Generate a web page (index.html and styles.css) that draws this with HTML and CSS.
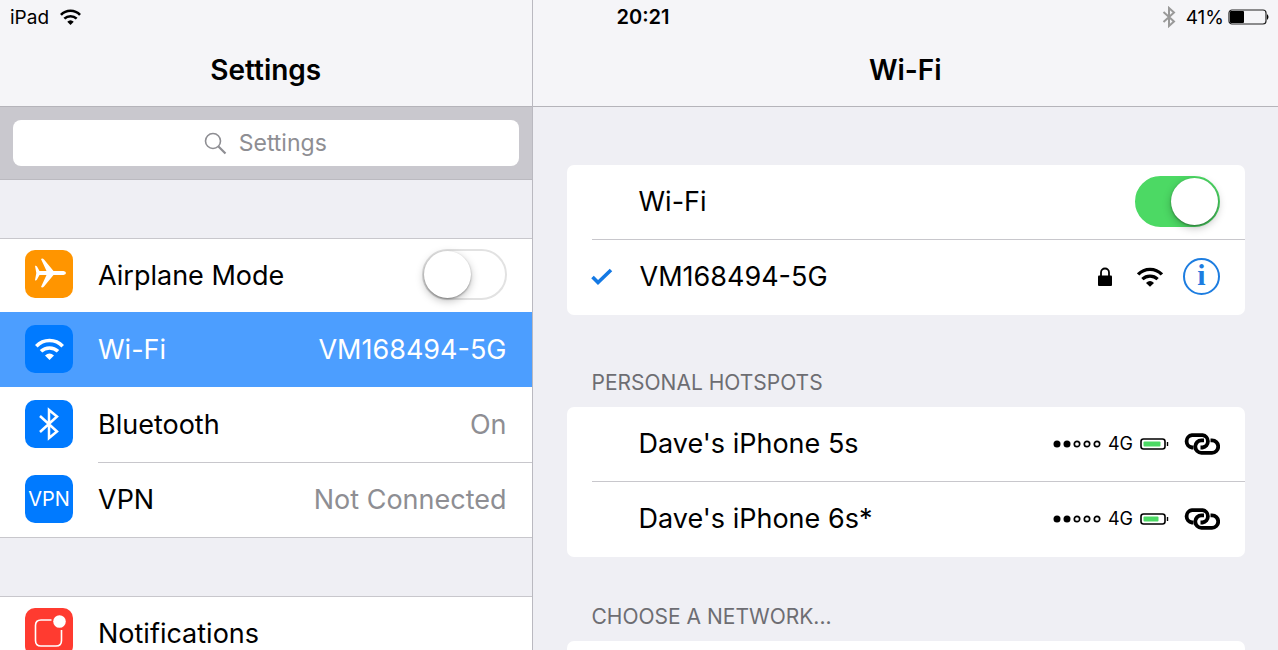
FILE: index.html
```html
<!DOCTYPE html>
<html lang="en">
<head>
    <meta charset="UTF-8">
    <meta name="viewport" content="width=device-width, initial-scale=1.0">
    <title>Settings - Wi-Fi</title>
    <link rel="stylesheet" href="styles.css">
</head>
<body>
    <!-- Shared icons -->
    <svg class="sprite" aria-hidden="true">
        <symbol id="wifi" viewBox="0 0 29 22">
            <path d="M1.3 8.2A18 18 0 0 1 27.7 8.2M6 13.3A12.4 12.4 0 0 1 23 13.3" fill="none" stroke="currentColor" stroke-width="3.6"/>
            <path d="M10 17.6Q14.5 13.4 19 17.6L14.5 22Z" fill="currentColor"/>
        </symbol>
        <symbol id="bluetooth" viewBox="0 0 20 34">
            <path d="M1 9L18 24.5L10 31V3L18 9.500L1 25" fill="none" stroke="currentColor" stroke-width="2.500"/>
        </symbol>
        <symbol id="link" viewBox="0 0 36 22">
            <g fill="none" stroke="currentColor" stroke-width="3.8">
                <path d="M9.500 14.500H8A6.200 6.200 0 0 1 8 2.200H18.500A6.200 6.200 0 0 1 18.500 14.500H16.500"/>
                <path d="M26.500 7.400H28A6.200 6.200 0 0 1 28 19.800H17.500A6.200 6.200 0 0 1 17.500 7.400H20"/>
            </g>
        </symbol>
        <symbol id="signal" viewBox="0 0 48 8">
            <circle cx="4" cy="4" r="3.500"/>
            <circle cx="14" cy="4" r="3.500"/>
            <g fill="none" stroke="currentColor" stroke-width="1.700">
                <circle cx="24" cy="4" r="2.700"/>
                <circle cx="34" cy="4" r="2.700"/>
                <circle cx="44" cy="4" r="2.700"/>
            </g>
        </symbol>
    </svg>

    <div class="status-bar">
        <div class="status-left">
            <span>iPad</span>
            <svg width="21" height="16"><use href="#wifi"/></svg>
        </div>
        <div class="status-time">20:21</div>
        <div class="status-right">
            <svg class="status-bluetooth" width="14" height="22" viewBox="0 0 14 22">
                <path d="M1.500 6L12 15.500L7 20V2L12 6.500L1.500 16" fill="none" stroke="currentColor" stroke-width="2"/>
            </svg>
            <span>41%</span>
            <svg width="48" height="16" viewBox="0 0 48 16">
                <rect x="1" y="1" width="37" height="14" rx="3" fill="none" stroke="#222" stroke-width="1.200"/>
                <rect x="2" y="2" width="14" height="12" rx="1"/>
                <path d="M39 5Q42 8 39 11Z"/>
            </svg>
        </div>
    </div>

    <div class="split-view">
        <aside class="sidebar">
            <header class="nav-bar">
                <h1>Settings</h1>
            </header>

            <div class="search-bar">
                <svg class="search-icon" width="23" height="23" viewBox="0 0 23 23">
                    <circle cx="9" cy="9" r="7.500" fill="none" stroke="#8e8e93" stroke-width="1.600"/>
                    <path d="M14.500 14.500L21.500 21.500" stroke="#8e8e93" stroke-width="2.200"/>
                </svg>
                <input type="search" class="search-input" placeholder="Settings" aria-label="Search settings">
            </div>

            <div class="menu-group">
                <div class="menu-row">
                    <span class="icon icon-orange">
                        <svg width="48" height="48" viewBox="0 0 48 48">
                            <path fill="#fff" d="M38.500 21Q41 21.400 41 23Q41 24.600 38.500 25H28.500L19 36.500Q17.500 38 16 37L21.500 25H14.500L12 29.500Q11 31 10 30.300L11.300 23L10 15.800Q11 15.300 12 16.500L14.500 21H21.500L16 9Q17.500 8 19 9.500L28.500 21Z"/>
                        </svg>
                    </span>
                    <label class="row-label" for="airplaneMode">Airplane Mode</label>
                    <input type="checkbox" class="toggle" id="airplaneMode">
                </div>
                <a href="#" class="menu-row selected">
                    <span class="icon icon-blue">
                        <svg width="29" height="22"><use href="#wifi"/></svg>
                    </span>
                    <span class="row-label">Wi-Fi</span>
                    <span class="row-value">VM168494-5G</span>
                </a>
                <a href="#" class="menu-row">
                    <span class="icon icon-blue">
                        <svg width="20" height="34"><use href="#bluetooth"/></svg>
                    </span>
                    <span class="row-label">Bluetooth</span>
                    <span class="row-value">On</span>
                </a>
                <a href="#" class="menu-row divided">
                    <span class="icon icon-blue">VPN</span>
                    <span class="row-label">VPN</span>
                    <span class="row-value">Not Connected</span>
                </a>
            </div>

            <div class="menu-group">
                <a href="#" class="menu-row">
                    <span class="icon icon-red">
                        <svg width="48" height="48" viewBox="0 0 48 48">
                            <path d="M26.500 12H16Q10.500 12 10.500 17.500V32.500Q10.500 38 16 38H31Q36.500 38 36.500 32.500V22" fill="none" stroke="#fff" stroke-width="1.600"/>
                            <circle cx="34.500" cy="13.500" r="6.300" fill="#fff"/>
                        </svg>
                    </span>
                    <span class="row-label">Notifications</span>
                </a>
            </div>
        </aside>

        <main class="detail">
            <header class="nav-bar">
                <h1>Wi-Fi</h1>
            </header>

            <div class="detail-body">
                <section class="card current">
                    <div class="card-row">
                        <label class="card-label" for="wifiToggle">Wi-Fi</label>
                        <input type="checkbox" class="toggle" id="wifiToggle" checked>
                    </div>
                    <div class="card-row">
                        <svg class="check" width="22" height="18" viewBox="0 0 22 18">
                            <path d="M1.500 9L7 14.500L20 2" fill="none" stroke="#1479e4" stroke-width="3.600"/>
                        </svg>
                        <span class="card-label">VM168494-5G</span>
                        <svg class="lock" width="14" height="19" viewBox="0 0 14 19">
                            <path d="M3 9V5.500A4 4 0 0 1 11 5.500V9" fill="none" stroke="#000" stroke-width="1.800"/>
                            <rect x="0" y="8.500" width="14" height="10.500" rx="1"/>
                        </svg>
                        <svg class="network-wifi" width="26" height="20"><use href="#wifi"/></svg>
                        <button class="info-button" aria-label="Network details">i</button>
                    </div>
                </section>

                <h2>PERSONAL HOTSPOTS</h2>
                <section class="card">
                    <div class="card-row">
                        <span class="card-label">Dave's iPhone 5s</span>
                        <div class="hotspot">
                            <svg width="48" height="8"><use href="#signal"/></svg>
                            <span>4G</span>
                            <svg width="29" height="12" viewBox="0 0 29 12">
                                <rect x="1" y="1" width="24" height="10" rx="2.500" fill="none" stroke="#000" stroke-width="1.600"/>
                                <rect x="3.500" y="3.500" width="17" height="5" rx="1" fill="#4cd964"/>
                                <path d="M27.500 4V8" stroke="#000" stroke-width="1.400"/>
                            </svg>
                        </div>
                        <svg class="link" width="36" height="22"><use href="#link"/></svg>
                    </div>
                    <div class="card-row">
                        <span class="card-label">Dave's iPhone 6s*</span>
                        <div class="hotspot">
                            <svg width="48" height="8"><use href="#signal"/></svg>
                            <span>4G</span>
                            <svg width="29" height="12" viewBox="0 0 29 12">
                                <rect x="1" y="1" width="24" height="10" rx="2.500" fill="none" stroke="#000" stroke-width="1.600"/>
                                <rect x="3.500" y="3.500" width="15" height="5" rx="1" fill="#4cd964"/>
                                <path d="M27.500 4V8" stroke="#000" stroke-width="1.400"/>
                            </svg>
                        </div>
                        <svg class="link" width="36" height="22"><use href="#link"/></svg>
                    </div>
                </section>

                <h2>CHOOSE A NETWORK...</h2>
                <section class="card">
                    <div class="card-row"></div>
                </section>
            </div>
        </main>
    </div>
</body>
</html>
```

FILE: styles.css
```css
* {
    box-sizing: border-box;
}

body {
    margin: 0;
    height: 100vh;
    overflow: hidden;
    background-color: #efeff4;
    color: #000;
    font-family: Inter, Roboto, sans-serif;
    font-size: 27px;
}

svg {
    display: block;
    flex: none;
}

a {
    color: inherit;
    text-decoration: none;
}

.sprite {
    position: absolute;
    width: 0;
    height: 0;
}

/* Status bar floats over both panes */
.status-bar {
    position: absolute;
    top: 0;
    left: 0;
    right: 0;
    display: grid;
    grid-template-columns: 1fr auto 1fr;
    align-items: center;
    height: 34px;
    padding: 0 2px 0 10px;
    font-size: 19px;
}

.status-left,
.status-right {
    display: flex;
    align-items: center;
}

.status-left {
    gap: 11px;
}

.status-right {
    justify-content: flex-end;
    gap: 4px;
}

.status-bluetooth {
    color: #999;
    margin-right: 6px;
}

.status-time {
    font-size: 20px;
    font-weight: 600;
}

.split-view {
    display: grid;
    grid-template-columns: 5fr 7fr;
    height: 100%;
}

.sidebar {
    border-right: 1px solid #bab9c0;
    overflow: hidden;
}

.detail {
    overflow: hidden;
}

.nav-bar {
    display: flex;
    justify-content: center;
    align-items: flex-end;
    height: 107px;
    padding-bottom: 18px;
    background-color: #f5f5f8;
    border-bottom: 1px solid #b5b4ba;
}

h1 {
    margin: 0;
    font-size: 28px;
    line-height: 36px;
    font-weight: 600;
}

.search-bar {
    position: relative;
    padding: 13px;
    background-color: #c9c8ce;
    border-bottom: 1px solid #bbbac0;
}

.search-icon {
    position: absolute;
    top: 25px;
    left: calc(50% - 62px);
}

.search-input {
    display: block;
    width: 100%;
    height: 46px;
    padding: 0 0 0 34px;
    border: none;
    border-radius: 8px;
    background-color: #fff;
    font-family: inherit;
    font-size: 23px;
    text-align: center;
    outline: none;
}

.search-input::-webkit-search-cancel-button {
    display: none;
}

.search-input::placeholder {
    color: #8e8e93;
}

/* Sidebar rows */
.menu-group {
    margin-top: 58px;
    background-color: #fff;
    border-top: 1px solid #c8c7cc;
    border-bottom: 1px solid #c8c7cc;
}

.menu-row {
    position: relative;
    display: flex;
    align-items: center;
    height: 75px;
    padding: 0 25px 2px;
}

.menu-row:first-child {
    height: 74px;
    padding-bottom: 4px;
}

.menu-row.selected {
    margin-top: -1px;
    background-color: #4c9eff;
    color: #fff;
}

/* Separator starts under the label, not under the icon */
.menu-row.divided::before {
    content: "";
    position: absolute;
    top: 0;
    left: 98px;
    right: 0;
    height: 1px;
    background-color: #c8c7cc;
}

.icon {
    display: flex;
    justify-content: center;
    align-items: center;
    width: 48px;
    height: 48px;
    margin-right: 25px;
    border-radius: 10px;
    color: #fff;
    font-size: 20px;
}

.icon-orange {
    background-color: #ff9500;
}

.icon-blue {
    background-color: #007aff;
}

.icon-red {
    background-color: #ff3b30;
}

.row-label,
.card-label {
    flex: 1;
}

.row-label,
.row-value {
    padding-top: 2px;
}

.row-value {
    color: #8e8e93;
}

.selected .row-value {
    color: #fff;
}

.toggle {
    appearance: none;
    width: 85px;
    height: 51px;
    margin: 0;
    padding: 2px;
    border: 2px solid #e2e2e2;
    border-radius: 26px;
    background-color: #fff;
}

.toggle::before {
    content: "";
    display: block;
    width: 47px;
    height: 47px;
    margin: -2px;
    border-radius: 50%;
    background-color: #fff;
    box-shadow: 0 3px 8px rgba(0, 0, 0, 0.25), 0 1px 2px rgba(0, 0, 0, 0.35);
}

.toggle:checked {
    border-color: #4cd964;
    background-color: #4cd964;
}

.toggle:checked::before {
    margin-left: 32px;
}

/* Right pane */
.detail-body {
    padding: 58px 33px 0 34px;
}

.card {
    background-color: #fff;
    border-radius: 7px;
}

.card.current {
    margin-bottom: 54px;
}

.card-row {
    position: relative;
    display: flex;
    align-items: center;
    height: 75px;
    padding: 0 25px 2px 72px;
}

.card-row + .card-row::before {
    content: "";
    position: absolute;
    top: -1px;
    left: 25px;
    right: 0;
    height: 1px;
    background-color: #c8c7cc;
}

.check {
    margin: 0 27px 0 -48px;
}

.lock {
    margin-right: 25px;
}

.network-wifi {
    margin-right: 20px;
}

.info-button {
    width: 37px;
    height: 37px;
    padding: 0 0 3px;
    border: 2px solid #1d7de0;
    border-radius: 50%;
    background: none;
    color: #1d7de0;
    font-family: "Liberation Serif", serif;
    font-size: 30px;
    font-weight: 700;
    line-height: 30px;
    cursor: pointer;
}

.hotspot {
    display: flex;
    align-items: center;
    gap: 7px;
    font-size: 18px;
}

.link {
    margin-left: 15px;
}

h2 {
    margin: 46px 0 0;
    padding: 0 25px 10px;
    color: #6d6d72;
    font-size: 21px;
    line-height: 28px;
    font-weight: 400;
}

.current + h2 {
    margin-top: 0;
}
```
